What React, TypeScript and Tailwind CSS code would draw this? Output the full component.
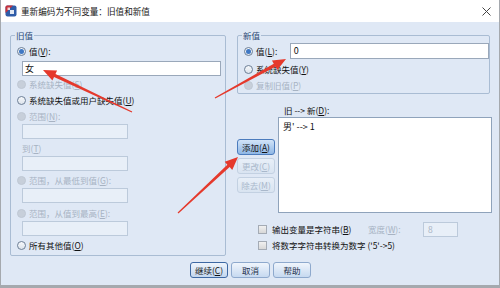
import React from "react";

const RED = "#e5392c";

function Arrow({ x1, y1, x2, y2 }: { x1: number; y1: number; x2: number; y2: number }) {
  const dx = x2 - x1;
  const dy = y2 - y1;
  const len = Math.hypot(dx, dy);
  const ux = dx / len;
  const uy = dy / len;
  const nx = -uy;
  const ny = ux;
  const head = 13;
  const hw = 5.5;
  const bx = x2 - ux * head;
  const by = y2 - uy * head;
  const pts = [
    [x1 + nx * 0.6, y1 + ny * 0.6],
    [bx + nx * 1.7, by + ny * 1.7],
    [bx + nx * hw, by + ny * hw],
    [x2, y2],
    [bx - nx * hw, by - ny * hw],
    [bx - nx * 1.7, by - ny * 1.7],
    [x1 - nx * 0.6, y1 - ny * 0.6],
  ];
  return <polygon points={pts.map((p) => p.join(",")).join(" ")} fill={RED} />;
}

function Radio({ checked, disabled }: { checked?: boolean; disabled?: boolean }) {
  if (disabled) {
    return <span className="w-[9px] h-[9px] rounded-full bg-[#c7cfda] border border-[#bfc8d4] shrink-0" />;
  }
  return (
    <span className="w-[9px] h-[9px] rounded-full border border-[#6d7f96] bg-gradient-to-b from-[#f6f8fb] to-[#dde4ec] flex items-center justify-center shrink-0">
      {checked && <span className="w-[5px] h-[5px] rounded-full bg-[#3f78c4]" />}
    </span>
  );
}

function Check() {
  return <span className="w-[9px] h-[9px] border border-[#a4abb5] bg-gradient-to-b from-[#f0f0f0] to-[#d8d8d8] shrink-0" />;
}

function Label({ t, k, colon, off }: { t: string; k: string; colon?: boolean; off?: boolean }) {
  return (
    <span className={off ? "text-[#a7b3c3] whitespace-nowrap" : "text-[#111] whitespace-nowrap"}>
      {t}(<span className="underline">{k}</span>){colon ? ":" : ""}
    </span>
  );
}

function Row({ children, mt = "" }: { children: React.ReactNode; mt?: string }) {
  return <div className={`h-[16px] flex items-center gap-[3px] pl-[6px] ${mt}`}>{children}</div>;
}

function OffInput({ mt = "" }: { mt?: string }) {
  return <div className={`h-[15px] w-[106px] ml-[11px] bg-[#e8eff8] border border-[#bccadb] ${mt}`} />;
}

function Btn({ children, w, kind = "normal" }: { children: React.ReactNode; w: string; kind?: "normal" | "hot" | "off" | "default" }) {
  const styles = {
    normal: "border-[#8ea9cd] from-[#f0f5fc] to-[#c6d9f0] text-[#1c2c48]",
    default: "border-[#3d68a3] from-[#eef4fc] to-[#c3d7ef] text-[#1c2c48]",
    hot: "border-[#4c7cbd] from-[#d2e4f8] to-[#8fb7e5] text-[#14233d]",
    off: "border-[#c3d1e2] from-[#e8eff8] to-[#d9e4f1] text-[#a9b8cb]",
  }[kind];
  return (
    <div className={`${w} h-[16px] rounded-[3px] border bg-gradient-to-b ${styles} flex items-center justify-center leading-none whitespace-nowrap`}>
      {children}
    </div>
  );
}

export default function App() {
  return (
    <div className="relative w-[500px] h-[288px] overflow-hidden bg-[#dfe8f5] border-l border-r border-b-[3px] border-[#a5a9ae] font-['Noto_Sans_CJK_SC',sans-serif] text-[8.5px]">
      {/* title bar */}
      <div className="h-[22px] bg-white flex items-center pl-[4px] pr-[8px]">
        <svg width="12" height="12" viewBox="0 0 12 12" className="shrink-0">
          <rect x="0.5" y="0.5" width="11" height="11" rx="2" fill="#2f5ca8" />
          <path d="M2 0.5 H8 L0.5 8 V2 A1.5 1.5 0 0 1 2 0.5 Z" fill="#c7313a" />
          <rect x="5" y="5" width="4" height="4" fill="#fff" opacity="0.85" />
          <rect x="2.5" y="2.5" width="2.5" height="2.5" fill="#fff" opacity="0.8" />
        </svg>
        <span className="ml-[4px] text-[#1a1a1a] text-[8.6px]">重新编码为不同变量：旧值和新值</span>
        <svg width="9" height="9" viewBox="0 0 9 9" className="ml-auto">
          <path d="M0.5 0.5 L8.5 8.5 M8.5 0.5 L0.5 8.5" stroke="#444" strokeWidth="1" />
        </svg>
      </div>

      {/* body */}
      <div className="flex flex-col">
        <div className="flex items-start pt-[13px] pl-[9px]">
          {/* old value */}
          <div className="w-[216px] h-[221px] border border-[#a9bcd3] rounded-[2px] flex flex-col shrink-0">
            <div className="-mt-[7px] ml-[4px] px-[1px] w-fit h-[12px] leading-[12px] bg-[#dfe8f5] text-[#2c4a75]">旧值</div>
            <Row mt="mt-[2px]">
              <Radio checked />
              <Label t="值" k="V" colon />
            </Row>
            <div className="h-[15px] w-[199px] ml-[11px] mt-[2px] bg-white border border-[#9aa8ba] pl-[2px] leading-[13px] text-[9px] text-[#111]">女</div>
            <Row>
              <Radio disabled />
              <Label t="系统缺失值" k="S" off />
            </Row>
            <Row>
              <Radio />
              <Label t="系统缺失值或用户缺失值" k="U" />
            </Row>
            <Row>
              <Radio disabled />
              <Label t="范围" k="N" colon off />
            </Row>
            <OffInput />
            <div className="h-[16px] mt-[1px] pl-[11px] flex items-center">
              <Label t="到" k="T" off />
            </div>
            <OffInput />
            <Row mt="mt-[1px]">
              <Radio disabled />
              <Label t="范围，从最低到值" k="G" colon off />
            </Row>
            <OffInput />
            <Row mt="mt-[2px]">
              <Radio disabled />
              <Label t="范围，从值到最高" k="E" colon off />
            </Row>
            <OffInput />
            <Row mt="mt-[1px]">
              <Radio />
              <Label t="所有其他值" k="O" />
            </Row>
          </div>

          {/* right column */}
          <div className="ml-[11px] flex flex-col">
            <div className="w-[253px] h-[59px] border border-[#a9bcd3] rounded-[2px] flex flex-col">
              <div className="-mt-[7px] ml-[4px] px-[1px] w-fit h-[12px] leading-[12px] bg-[#dfe8f5] text-[#2c4a75]">新值</div>
              <Row mt="mt-[2px]">
                <Radio checked />
                <span className="w-[31px]">
                  <Label t="值" k="L" colon />
                </span>
                <div className="h-[16px] w-[200px] bg-white border border-[#9aa8ba] pl-[3px] leading-[14px] text-[9px] text-[#111]">0</div>
              </Row>
              <Row mt="mt-[2px]">
                <Radio />
                <Label t="系统缺失值" k="Y" />
              </Row>
              <Row>
                <Radio disabled />
                <Label t="复制旧值" k="P" off />
              </Row>
            </div>

            <div className="flex mt-[10px]">
              <div className="w-[38px] pt-[35px] flex flex-col gap-[3px] shrink-0">
                <Btn w="w-[38px]" kind="hot">
                  <Label t="添加" k="A" />
                </Btn>
                <Btn w="w-[38px]" kind="off">
                  更改(<span className="underline">C</span>)
                </Btn>
                <Btn w="w-[38px]" kind="off">
                  除去(<span className="underline">M</span>)
                </Btn>
              </div>
              <div className="ml-[3px] flex flex-col">
                <div className="h-[12px] leading-[12px] pl-[6px] text-[#111]">
                  旧 --&gt; 新(<span className="underline">D</span>):
                </div>
                <div className="mt-[1px] w-[214px] h-[96px] bg-white border border-[#8fa3bb] px-[4px] pt-[2px] text-[9px] leading-[14px] text-[#111]">
                  男' --&gt; 1
                </div>
              </div>
            </div>

            <div className="mt-[8px] pl-[21px] flex flex-col">
              <div className="h-[16px] flex items-center">
                <Check />
                <span className="ml-[5px] w-[96px]">
                  <Label t="输出变量是字符串" k="B" />
                </span>
                <span className="w-[55px]">
                  <Label t="宽度" k="W" colon off />
                </span>
                <div className="w-[35px] h-[15px] bg-[#e8eff8] border border-[#bccadb] pl-[4px] leading-[13px] text-[#a7b3c3]">8</div>
              </div>
              <div className="h-[16px] flex items-center">
                <Check />
                <span className="ml-[5px] text-[#111] whitespace-nowrap">
                  将数字字符串转换为数字 ('5'-&gt;5)
                </span>
              </div>
            </div>
          </div>
        </div>

        <div className="mt-[6px] flex justify-center gap-[3px] pl-[1px]">
          <Btn w="w-[38px]" kind="default">
            <Label t="继续" k="C" />
          </Btn>
          <Btn w="w-[39px]">取消</Btn>
          <Btn w="w-[38px]">帮助</Btn>
        </div>
      </div>

      {/* red annotation arrows */}
      <svg className="absolute inset-0 pointer-events-none" width="500" height="288" viewBox="0 0 500 288">
        <Arrow x1={131} y1={112} x2={42} y2={70} />
        <Arrow x1={214} y1={98} x2={285} y2={59} />
        <Arrow x1={177} y1={213} x2={237} y2={157} />
      </svg>
    </div>
  );
}
